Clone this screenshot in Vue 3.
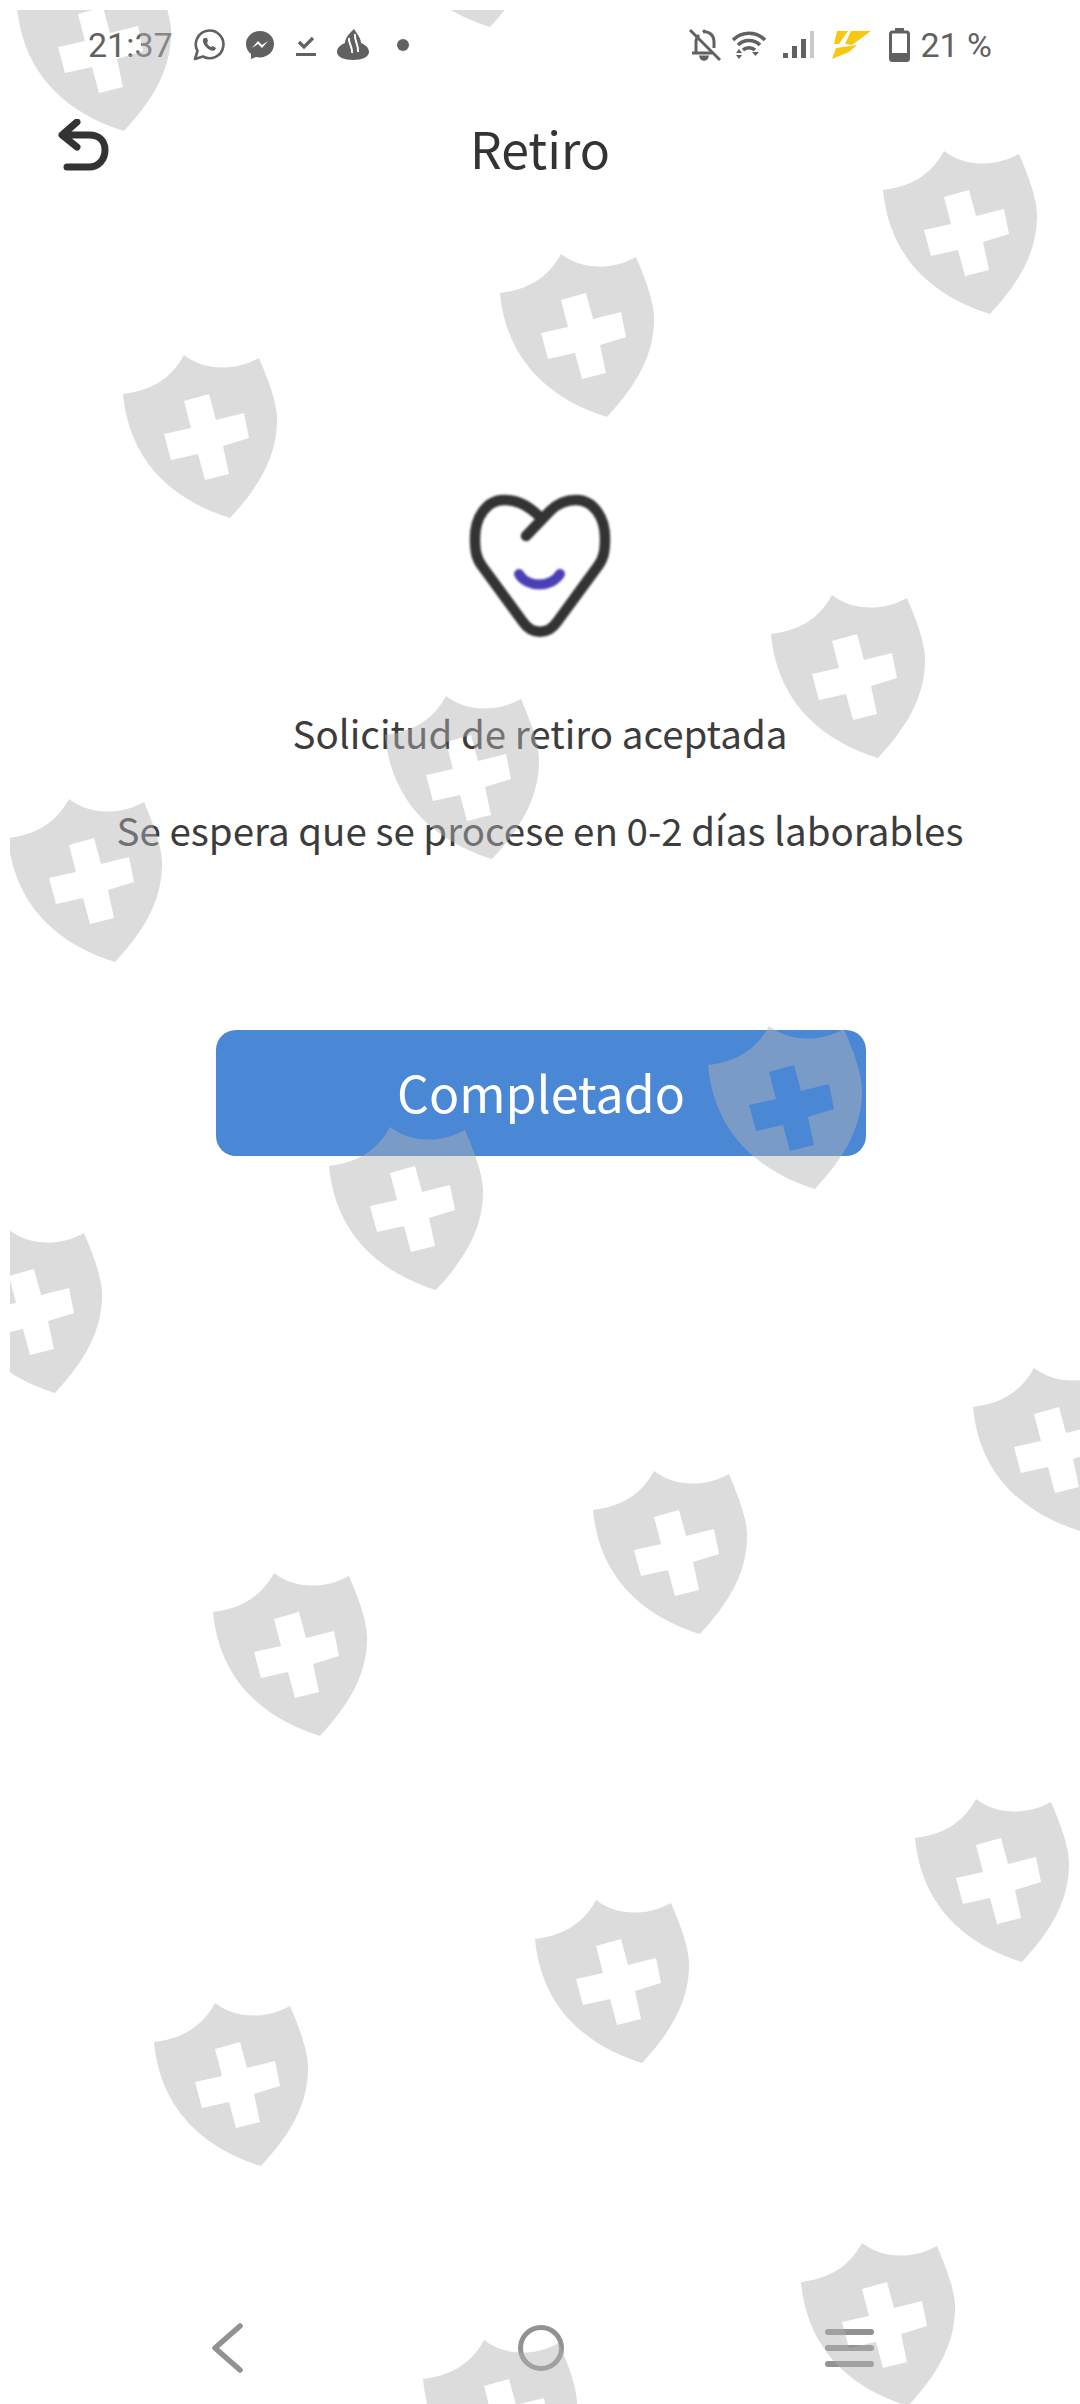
<script setup>
// origin of each watermark shield on the page
const shields = [
  [14, -36], [380, -140], [880, 147], [497, 250], [120, 351], [768, 591], [382, 692],
  [5, 795], [705, 1022], [326, 1123], [-55, 1226], [970, 1364], [590, 1467], [210, 1569],
  [912, 1795], [532, 1896], [151, 1999], [798, 2239], [420, 2336]
]

const shieldPath =
  'M3 43C28 40 50 30 64 4C82 18 112 22 139 7C150 33 158 55 157 72C156 108 137 138 110 167C62 152 10 118 3 43Z' +
  'M64 50L89 43L96 69L124 62L129 87L103 95L109 123L85 129L78 103L51 109L44 83L71 77Z'
</script>

<template>
  <div class="page">
    <div class="status">
      <div class="status-left">
        <span class="time">21:37</span>
        <svg class="ic" width="32" height="32" viewBox="0 0 32 32">
          <path d="M2 30l2.500-8A13.800 13.800 0 1 1 10 27.500Z" fill="none" stroke="#616161" stroke-width="2.600" stroke-linejoin="round" />
          <path d="M11 9c-2 2-1 6 2 9s7 5 9 3l1-2-3-2-2 1c-2-1-3-2-4-4l1-2-1-3Z" fill="#616161" />
        </svg>
        <svg class="ic" width="30" height="30" viewBox="0 0 30 30">
          <path d="M15 1C7 1 1 7 1 14c0 4 2 8 5 10v5l5-2c1 .300 3 .400 4 .400 8 0 14-6 14-13.400S23 1 15 1Z" fill="#616161" />
          <path d="M7 18l6-7 4 4 6-4-6 7-4-4Z" fill="#fff" />
        </svg>
        <svg class="ic" width="22" height="24" viewBox="0 0 22 24">
          <path d="M4 9l5 5L18 5" fill="none" stroke="#616161" stroke-width="3.200" />
          <path d="M1 21.500h20" stroke="#616161" stroke-width="3" />
        </svg>
        <svg class="ic" width="32" height="32" viewBox="0 0 32 32">
          <path d="M17 0C12 5 8 9 8 14C3 16 0 19 0 23c0 5 7 8 16 8s16-3 16-8c0-4-3-7-8-9C24 9 20 5 17 0Z" fill="#616161" />
          <path d="M12 9c-1 5 4 9 3 15M18 5c-1 7 4 11 3 18" fill="none" stroke="#fff" stroke-width="2" />
        </svg>
        <span class="dot"></span>
      </div>
      <div class="status-right">
        <svg class="ic" width="34" height="34" viewBox="0 0 34 34">
          <path d="M8 24V14c0-3 1-5 3-7M15 4c6-1 11 3 11 10v6M4 25h20M13 29c1 3 5 3 6 0Z" fill="none" stroke="#616161" stroke-width="3" />
          <path d="M14 4l2-3 3 3Z" fill="#616161" />
          <path d="M2 2l30 30" stroke="#616161" stroke-width="3" />
        </svg>
        <svg class="ic" width="34" height="28" viewBox="0 0 34 28">
          <path d="M1 9c9-9 23-9 32 0M6 14c6-6 16-6 22 0M11 19c3-3 9-3 12 0" fill="none" stroke="#616161" stroke-width="3.600" />
          <path d="M4 22l3-4 3 4ZM4 24h6l-3 4ZM20 21h7l-3.500 4Z" fill="#616161" />
        </svg>
        <svg class="ic" width="32" height="28" viewBox="0 0 32 28">
          <rect x="0" y="22" width="5" height="5" fill="#616161" />
          <rect x="9" y="15" width="5" height="12" fill="#616161" />
          <rect x="18" y="8" width="5" height="19" fill="#616161" />
          <rect x="27" y="0" width="4" height="27" fill="#c9c9c9" />
        </svg>
        <svg class="ic" width="40" height="28" viewBox="0 0 40 28">
          <path d="M5 0h11L7 13h-5ZM19 0h20L20 14l-7-1ZM4 17l21-3-8 7-17 7Z" fill="#f5c814" />
        </svg>
        <svg class="ic" width="21" height="34" viewBox="0 0 21 34">
          <rect x="6" y="0" width="9" height="4" fill="#616161" />
          <rect x="1.500" y="4" width="18" height="28.500" rx="2" fill="#fff" stroke="#616161" stroke-width="3" />
          <rect x="1.500" y="25" width="18" height="8" rx="1" fill="#616161" />
        </svg>
        <span class="pct">21 %</span>
      </div>
    </div>

    <header class="head">
      <svg class="back" width="52" height="52" viewBox="0 0 52 52">
        <path d="M20 3L5 16l15 12M6 16h26c10 0 16 6 16 15s-6 17-16 17H10" fill="none" stroke="#333" stroke-width="7" stroke-linecap="round" stroke-linejoin="round" />
      </svg>
      <h1 class="title">Retiro</h1>
    </header>

    <main class="body">
      <svg class="heart" width="142" height="144" viewBox="0 0 142 144">
        <path
          d="M57 42L81 17C90 8 98 6 107 6C125 6 136 24 136 44C136 56 135 64 129 72L88 128C79 141 63 141 54 128L13 72C7 64 6 56 6 44C6 24 17 6 35 6C46 6 56 9 70 22"
          fill="none" stroke="#333" stroke-width="10.500" stroke-linecap="round" stroke-linejoin="round" />
        <path d="M50 80C58 94 82 94 91 80" fill="none" stroke="#4b3fb5" stroke-width="10" stroke-linecap="round" />
      </svg>
      <p class="msg first">Solicitud de retiro aceptada</p>
      <p class="msg second">Se espera que se procese en 0-2 días laborables</p>
      <button class="done" type="button">Completado</button>
    </main>

    <nav class="nav">
      <svg width="36" height="50" viewBox="0 0 36 50">
        <path d="M31 3L6 25l25 22" fill="none" stroke="#929292" stroke-width="5.500" stroke-linecap="round" stroke-linejoin="round" />
      </svg>
      <span class="home"></span>
      <span class="menu"><i></i><i></i><i></i></span>
    </nav>

    <svg class="marks" width="1070" height="2394" viewBox="10 10 1070 2394">
      <path v-for="(s, i) in shields" :key="i" :d="shieldPath" :transform="`translate(${s[0]} ${s[1]})`" fill="rgb(178,178,178)" fill-opacity="0.46" fill-rule="evenodd" />
    </svg>
  </div>
</template>

<style>
body { margin: 0; background: #fff; }
</style>

<style scoped>
.page {
  position: relative;
  width: 1080px;
  height: 2404px;
  overflow: hidden;
  display: flex;
  flex-direction: column;
  background: #fff;
  font-family: "Noto Sans CJK SC", "Noto Sans", sans-serif;
  color: #3c3c3c;
}
.status {
  height: 90px;
  display: flex;
  justify-content: space-between;
  align-items: center;
  padding: 0 88px;
  font-family: Roboto, sans-serif;
  font-size: 34px;
  color: #616161;
}
.status-left, .status-right { display: flex; align-items: center; }
.ic { flex: none; }
.status-left { gap: 20px; }
.dot { width: 12px; height: 12px; border-radius: 50%; background: #616161; margin-left: 8px; }
.status-right { gap: 10px; }
.status-right .ic:nth-child(3) { margin-left: 7px; }
.status-right .ic:nth-child(4) { margin-left: 7px; }
.status-right .ic:nth-child(5) { margin-left: 7px; }
.head {
  position: relative;
  height: 114px;
  padding-bottom: 6px;
  display: flex;
  align-items: center;
  justify-content: center;
}
.back { position: absolute; left: 57px; top: 29px; }
.title { margin: 0; font-size: 50px; font-weight: 400; color: #333; }
.body {
  display: flex;
  flex-direction: column;
  align-items: center;
  padding-top: 284px;
}
.heart { filter: blur(0.8px); }
.msg { margin: 0; font-size: 38.500px; line-height: 60px; color: #3c3c3c; }
.first { margin-top: 64px; }
.second { margin-top: 37px; }
.done {
  margin: 171px 0 0 2px;
  width: 650px;
  height: 126px;
  padding: 0 0 5px;
  border: 0;
  border-radius: 20px;
  background: #4a88d6;
  color: #fff;
  font-family: inherit;
  font-size: 50px;
}
.nav {
  margin-top: auto;
  margin-bottom: 28px;
  height: 56px;
  padding: 0 206px 0 209px;
  display: flex;
  justify-content: space-between;
  align-items: center;
}
.home {
  width: 36px;
  height: 36px;
  margin-left: 12px;
  border: 5px solid #929292;
  border-radius: 50%;
}
.menu { width: 49px; display: flex; flex-direction: column; gap: 10px; }
.menu i { display: block; height: 6px; border-radius: 3px; background: #929292; }
.marks { position: absolute; left: 10px; top: 10px; pointer-events: none; }
</style>
